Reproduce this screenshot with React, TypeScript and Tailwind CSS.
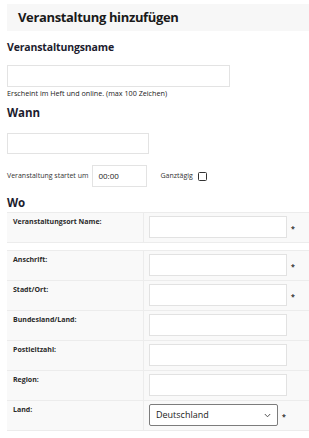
import React from "react";

const font = { fontFamily: '"Open Sans", "Noto Sans", sans-serif' };

function Row({
  label,
  star,
  select,
}: {
  label: string;
  star?: boolean;
  select?: boolean;
}) {
  return (
    <div className="grid grid-cols-[137px_1fr] border-t border-[#ececec] h-[30px]">
      <div className="bg-[#f9f9f9] border-r border-[#ececec] pl-[6px] pt-[4px] text-[7px] leading-[10px] font-bold text-[#2a2a2a]">
        {label}
      </div>
      <div className="bg-[#f9f9f9] pl-[5px] pt-[2px] flex items-start">
        {select ? (
          <div className="w-[129px] h-[22px] border border-[#7c7c7c] rounded-[2px] bg-white flex items-center justify-between pl-[6px] pr-[6px] mt-[1px]">
            <span className="text-[9px] text-[#222]">Deutschland</span>
            <svg width="7" height="5" viewBox="0 0 7 5" className="mt-[1px]">
              <path d="M0.8 1 L3.5 3.8 L6.2 1" fill="none" stroke="#444" strokeWidth="0.9" />
            </svg>
          </div>
        ) : (
          <div className="w-[138px] h-[22px] border border-[#e2e2e2] bg-white mt-[1px]" />
        )}
        {star && (
          <span className="text-[7px] leading-none text-[#333] font-bold ml-[4px] mt-[10px]">*</span>
        )}
      </div>
    </div>
  );
}

export default function App() {
  return (
    <div className="w-[309px] h-[438px] bg-white overflow-hidden text-[#1d1d2c]" style={font}>
      <div className="ml-[7px] mt-[4px] h-[27px] bg-[#f7f7f7] pl-[11px] flex items-center">
        <span className="text-[13px] tracking-[-0.35px] font-bold leading-none text-[#1a1a1a]">Veranstaltung hinzufügen</span>
      </div>

      <div className="ml-[7px] mt-[9px] text-[10.5px] tracking-[-0.15px] leading-[14px] font-bold text-[#1c1c2e]">Veranstaltungsname</div>
      <div className="ml-[7px] mt-[11px] w-[223px] h-[22px] border border-[#e3e3e3] bg-white" />
      <div className="ml-[7px] mt-[1px] text-[7.2px] leading-[10px] text-[#222]">
        Erscheint im Heft und online. (max 100 Zeichen)
      </div>

      <div className="ml-[7px] mt-[8px] text-[11.5px] leading-[14px] font-bold text-[#1c1c2e]">Wann</div>
      <div className="ml-[7px] mt-[13px] w-[142px] h-[21px] border border-[#e3e3e3] bg-white" />

      <div className="ml-[7px] mt-[11px] flex items-center h-[22px]">
        <span className="text-[7px] text-[#333]">Veranstaltung startet um</span>
        <div className="ml-[4px] w-[55px] h-[22px] border border-[#e3e3e3] bg-white flex items-center pl-[5px]">
          <span className="text-[8px] text-[#222]">00:00</span>
        </div>
        <span className="ml-[13px] text-[7px] text-[#333]">Ganztägig</span>
        <div className="ml-[5px] w-[9px] h-[9px] border border-[#333] rounded-[1.5px] bg-white" />
      </div>

      <div className="ml-[7px] mt-[9px] text-[11.5px] leading-[14px] font-bold text-[#1c1c2e]">Wo</div>

      <div className="ml-[7px] mt-[2px]">
        <Row label="Veranstaltungsort Name:" star />
        <div className="h-[8px] border-t border-[#ececec] bg-white" />
        <Row label="Anschrift:" star />
        <Row label="Stadt/Ort:" star />
        <Row label="Bundesland/Land:" />
        <Row label="Postleitzahl:" />
        <Row label="Region:" />
        <Row label="Land:" star select />
        <div className="h-[10px] border-t border-[#ececec] bg-white" />
      </div>
    </div>
  );
}
